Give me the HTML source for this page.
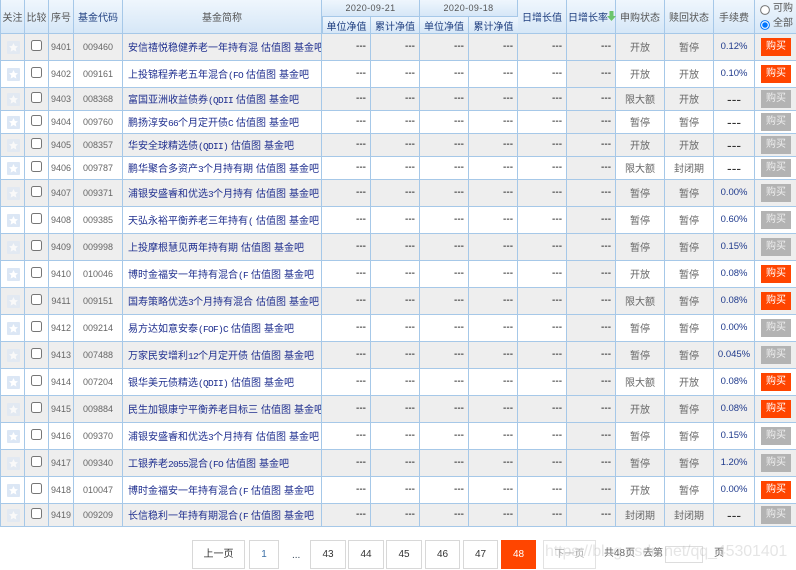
<!DOCTYPE html>
<html lang="zh">
<head>
<meta charset="utf-8">
<title>基金列表</title>
<style>
html,body{margin:0;padding:0;background:#fff;width:796px;height:570px;overflow:hidden;}
body{position:relative;font:10px "Liberation Sans","Noto Sans CJK SC",sans-serif;color:#666;}
table{position:absolute;left:0;top:0;width:796px;border-collapse:separate;border-spacing:0;table-layout:fixed;}
th,td{padding:0;box-sizing:border-box;border-right:1px solid #a6c8e8;border-bottom:1px solid #a6c8e8;text-align:center;white-space:nowrap;overflow:hidden;font-weight:normal;font-size:10px;}
th:last-child,td:last-child{border-right:0;}
th{background:linear-gradient(#eff6fd,#d6e7f7);color:#555;}
th.b{color:#1f3f80;}
th.d{font:9px "Liberation Sans",sans-serif;letter-spacing:.4px;color:#555;}
thead tr{height:17px;}
tbody tr{height:27px;}
tbody tr.s{height:23px;}
tbody tr:nth-child(odd) td{background:#eee;}
td:first-child,th:first-child{border-left:1px solid #a6c8e8;}
td:nth-child(n+3):nth-child(-n+14){padding-bottom:1px;}
td:nth-child(3),td:nth-child(4){font-size:9px;color:#666;}
td:nth-child(5){text-align:left;padding:0 4px 1px 5px;}
td:nth-child(n+6):nth-child(-n+11){text-align:right;padding-right:4px;color:#000;}
tbody td:nth-child(11){background:#eee;}
td:nth-child(14){color:#1f3a8c;font-size:9.5px;}
td a{color:#1f2f8f;text-decoration:none;}
td a+a{margin-left:3px;}
i{font:normal 9.5px "Liberation Mono",monospace;letter-spacing:-.7px;}
td.n{color:#333;font-size:14px;line-height:14px;padding-bottom:1px;}
svg.st{display:block;width:13px;height:13px;margin:1px 0 0 5.5px;}
tbody tr:nth-child(odd) svg.st{opacity:.65;}
input[type=checkbox]{width:11px;height:11px;margin:0;position:relative;top:-1.5px;display:inline-block;vertical-align:middle;}
b.o,b.g{display:block;width:30px;height:18px;line-height:18px;margin-left:6px;color:#fff;font-weight:normal;font-size:10px;text-align:center;}
b.o{background:#ff4500;}
b.g{background:#b3b3b3;color:#eee;}
.abs{position:absolute;}
.p{position:absolute;top:540px;height:29px;line-height:27px;box-sizing:border-box;border:1px solid #d8d8d8;text-align:center;color:#333;font-size:10px;background:#fff;}
.t{position:absolute;font-size:10px;color:#666;line-height:14px;}
</style>
</head>
<body>
<svg width="0" height="0" style="position:absolute"><defs><symbol id="s" viewBox="0 0 13 13"><rect width="13" height="13" rx="1" fill="#dce7f5"/><polygon points="6.5,2 7.9,5 11,5.3 8.7,7.4 9.4,10.6 6.5,9 3.6,10.6 4.3,7.4 2,5.3 5.1,5" fill="#fff"/></symbol></defs></svg>
<table>
<colgroup><col style="width:25px"><col style="width:24px"><col style="width:25px"><col style="width:49px"><col style="width:199px"><col style="width:49px"><col style="width:49px"><col style="width:49px"><col style="width:49px"><col style="width:49px"><col style="width:49px"><col style="width:49px"><col style="width:49px"><col style="width:41px"><col style="width:42px"></colgroup>
<thead>
<tr><th rowspan="2">关注</th><th rowspan="2">比较</th><th rowspan="2">序号</th><th rowspan="2" class="b">基金代码</th><th rowspan="2">基金简称</th><th colspan="2" class="d">2020-09-21</th><th colspan="2" class="d">2020-09-18</th><th rowspan="2" class="b">日增长值</th><th rowspan="2" class="b" style="text-align:left;padding-left:1px">日增长率</th><th rowspan="2">申购状态</th><th rowspan="2">赎回状态</th><th rowspan="2">手续费</th><th rowspan="2"></th></tr>
<tr><th class="b">单位净值</th><th class="b">累计净值</th><th class="b">单位净值</th><th class="b">累计净值</th></tr>
</thead>
<tbody>
<tr><td><svg class="st"><use href="#s"/></svg></td><td><input type="checkbox"></td><td>9401</td><td>009460</td><td><a>安信禧悦稳健养老一年持有混</a><a>估值图</a><a>基金吧</a></td><td>---</td><td>---</td><td>---</td><td>---</td><td>---</td><td>---</td><td>开放</td><td>暂停</td><td>0.12%</td><td><b class="o">购买</b></td></tr>
<tr><td><svg class="st"><use href="#s"/></svg></td><td><input type="checkbox"></td><td>9402</td><td>009161</td><td><a>上投锦程养老五年混合<i>(FO</i></a><a>估值图</a><a>基金吧</a></td><td>---</td><td>---</td><td>---</td><td>---</td><td>---</td><td>---</td><td>开放</td><td>开放</td><td>0.10%</td><td><b class="o">购买</b></td></tr>
<tr class="s"><td><svg class="st"><use href="#s"/></svg></td><td><input type="checkbox"></td><td>9403</td><td>008368</td><td><a>富国亚洲收益债券<i>(QDII</i></a><a>估值图</a><a>基金吧</a></td><td>---</td><td>---</td><td>---</td><td>---</td><td>---</td><td>---</td><td>限大额</td><td>开放</td><td class="n">---</td><td><b class="g">购买</b></td></tr>
<tr class="s"><td><svg class="st"><use href="#s"/></svg></td><td><input type="checkbox"></td><td>9404</td><td>009760</td><td><a>鹏扬淳安<i>66</i>个月定开债<i>C</i></a><a>估值图</a><a>基金吧</a></td><td>---</td><td>---</td><td>---</td><td>---</td><td>---</td><td>---</td><td>暂停</td><td>暂停</td><td class="n">---</td><td><b class="g">购买</b></td></tr>
<tr class="s"><td><svg class="st"><use href="#s"/></svg></td><td><input type="checkbox"></td><td>9405</td><td>008357</td><td><a>华安全球精选债<i>(QDII)</i></a><a>估值图</a><a>基金吧</a></td><td>---</td><td>---</td><td>---</td><td>---</td><td>---</td><td>---</td><td>开放</td><td>开放</td><td class="n">---</td><td><b class="g">购买</b></td></tr>
<tr class="s"><td><svg class="st"><use href="#s"/></svg></td><td><input type="checkbox"></td><td>9406</td><td>009787</td><td><a>鹏华聚合多资产<i>3</i>个月持有期</a><a>估值图</a><a>基金吧</a></td><td>---</td><td>---</td><td>---</td><td>---</td><td>---</td><td>---</td><td>限大额</td><td>封闭期</td><td class="n">---</td><td><b class="g">购买</b></td></tr>
<tr><td><svg class="st"><use href="#s"/></svg></td><td><input type="checkbox"></td><td>9407</td><td>009371</td><td><a>浦银安盛睿和优选<i>3</i>个月持有</a><a>估值图</a><a>基金吧</a></td><td>---</td><td>---</td><td>---</td><td>---</td><td>---</td><td>---</td><td>暂停</td><td>暂停</td><td>0.00%</td><td><b class="g">购买</b></td></tr>
<tr><td><svg class="st"><use href="#s"/></svg></td><td><input type="checkbox"></td><td>9408</td><td>009385</td><td><a>天弘永裕平衡养老三年持有<i>(</i></a><a>估值图</a><a>基金吧</a></td><td>---</td><td>---</td><td>---</td><td>---</td><td>---</td><td>---</td><td>暂停</td><td>暂停</td><td>0.60%</td><td><b class="g">购买</b></td></tr>
<tr><td><svg class="st"><use href="#s"/></svg></td><td><input type="checkbox"></td><td>9409</td><td>009998</td><td><a>上投摩根慧见两年持有期</a><a>估值图</a><a>基金吧</a></td><td>---</td><td>---</td><td>---</td><td>---</td><td>---</td><td>---</td><td>暂停</td><td>暂停</td><td>0.15%</td><td><b class="g">购买</b></td></tr>
<tr><td><svg class="st"><use href="#s"/></svg></td><td><input type="checkbox"></td><td>9410</td><td>010046</td><td><a>博时金福安一年持有混合<i>(F</i></a><a>估值图</a><a>基金吧</a></td><td>---</td><td>---</td><td>---</td><td>---</td><td>---</td><td>---</td><td>开放</td><td>暂停</td><td>0.08%</td><td><b class="o">购买</b></td></tr>
<tr><td><svg class="st"><use href="#s"/></svg></td><td><input type="checkbox"></td><td>9411</td><td>009151</td><td><a>国寿策略优选<i>3</i>个月持有混合</a><a>估值图</a><a>基金吧</a></td><td>---</td><td>---</td><td>---</td><td>---</td><td>---</td><td>---</td><td>限大额</td><td>暂停</td><td>0.08%</td><td><b class="o">购买</b></td></tr>
<tr><td><svg class="st"><use href="#s"/></svg></td><td><input type="checkbox"></td><td>9412</td><td>009214</td><td><a>易方达如意安泰<i>(FOF)C</i></a><a>估值图</a><a>基金吧</a></td><td>---</td><td>---</td><td>---</td><td>---</td><td>---</td><td>---</td><td>暂停</td><td>暂停</td><td>0.00%</td><td><b class="g">购买</b></td></tr>
<tr><td><svg class="st"><use href="#s"/></svg></td><td><input type="checkbox"></td><td>9413</td><td>007488</td><td><a>万家民安增利<i>12</i>个月定开债</a><a>估值图</a><a>基金吧</a></td><td>---</td><td>---</td><td>---</td><td>---</td><td>---</td><td>---</td><td>暂停</td><td>暂停</td><td>0.045%</td><td><b class="g">购买</b></td></tr>
<tr><td><svg class="st"><use href="#s"/></svg></td><td><input type="checkbox"></td><td>9414</td><td>007204</td><td><a>银华美元债精选<i>(QDII)</i></a><a>估值图</a><a>基金吧</a></td><td>---</td><td>---</td><td>---</td><td>---</td><td>---</td><td>---</td><td>限大额</td><td>开放</td><td>0.08%</td><td><b class="o">购买</b></td></tr>
<tr><td><svg class="st"><use href="#s"/></svg></td><td><input type="checkbox"></td><td>9415</td><td>009884</td><td><a>民生加银康宁平衡养老目标三</a><a>估值图</a><a>基金吧</a></td><td>---</td><td>---</td><td>---</td><td>---</td><td>---</td><td>---</td><td>开放</td><td>暂停</td><td>0.08%</td><td><b class="o">购买</b></td></tr>
<tr><td><svg class="st"><use href="#s"/></svg></td><td><input type="checkbox"></td><td>9416</td><td>009370</td><td><a>浦银安盛睿和优选<i>3</i>个月持有</a><a>估值图</a><a>基金吧</a></td><td>---</td><td>---</td><td>---</td><td>---</td><td>---</td><td>---</td><td>暂停</td><td>暂停</td><td>0.15%</td><td><b class="g">购买</b></td></tr>
<tr><td><svg class="st"><use href="#s"/></svg></td><td><input type="checkbox"></td><td>9417</td><td>009340</td><td><a>工银养老<i>2055</i>混合<i>(FO</i></a><a>估值图</a><a>基金吧</a></td><td>---</td><td>---</td><td>---</td><td>---</td><td>---</td><td>---</td><td>暂停</td><td>暂停</td><td>1.20%</td><td><b class="g">购买</b></td></tr>
<tr><td><svg class="st"><use href="#s"/></svg></td><td><input type="checkbox"></td><td>9418</td><td>010047</td><td><a>博时金福安一年持有混合<i>(F</i></a><a>估值图</a><a>基金吧</a></td><td>---</td><td>---</td><td>---</td><td>---</td><td>---</td><td>---</td><td>开放</td><td>暂停</td><td>0.00%</td><td><b class="o">购买</b></td></tr>
<tr class="s"><td><svg class="st"><use href="#s"/></svg></td><td><input type="checkbox"></td><td>9419</td><td>009209</td><td><a>长信稳利一年持有期混合<i>(F</i></a><a>估值图</a><a>基金吧</a></td><td>---</td><td>---</td><td>---</td><td>---</td><td>---</td><td>---</td><td>封闭期</td><td>封闭期</td><td class="n">---</td><td><b class="g">购买</b></td></tr>
</tbody>
</table>

<svg class="abs" style="left:607px;top:11px" width="9" height="10" viewBox="0 0 9 10"><path d="M2.5 0H6.5V5H9L4.5 10L0 5H2.5Z" fill="#6cc56c"/></svg>

<svg class="abs" style="left:760px;top:5px" width="10" height="10" viewBox="0 0 10 10"><circle cx="5" cy="5" r="4.4" fill="#fff" stroke="#767676" stroke-width="1"/></svg>
<svg class="abs" style="left:760px;top:20px" width="10" height="10" viewBox="0 0 10 10"><circle cx="5" cy="5" r="4.4" fill="#fff" stroke="#0075ff" stroke-width="1"/><circle cx="5" cy="5" r="2.8" fill="#0075ff"/></svg>
<div class="t" style="left:773px;top:2px;color:#555">可购</div>
<div class="t" style="left:773px;top:17px;color:#555">全部</div>

<div class="p" style="left:192px;width:53px">上一页</div>
<div class="p" style="left:249px;width:30px;color:#3a6ea5">1</div>
<div class="t" style="left:292px;top:549px;color:#345">...</div>
<div class="p" style="left:310px;width:36px">43</div>
<div class="p" style="left:348px;width:36px">44</div>
<div class="p" style="left:386px;width:36px">45</div>
<div class="p" style="left:425px;width:35px">46</div>
<div class="p" style="left:463px;width:35px">47</div>
<div class="p" style="left:501px;width:35px;background:#ff4500;border-color:#ff4500;color:#fff">48</div>
<div class="p" style="left:543px;width:53px;color:#aaa;border-color:#e2e2e2">下一页</div>
<div class="t" style="left:604px;top:547px">共48页</div>
<div class="t" style="left:643px;top:547px">去第</div>
<div class="abs" style="left:665px;top:546px;width:38px;height:17px;box-sizing:border-box;border:1px solid #ddd"></div>
<div class="t" style="left:714px;top:547px">页</div>
<div class="abs" style="left:545px;top:542px;font:16px/20px 'Liberation Sans',sans-serif;color:rgba(170,170,170,.3);white-space:nowrap;letter-spacing:-.1px">https://blog.csdn.net/qq_45301401</div>
</body>
</html>
